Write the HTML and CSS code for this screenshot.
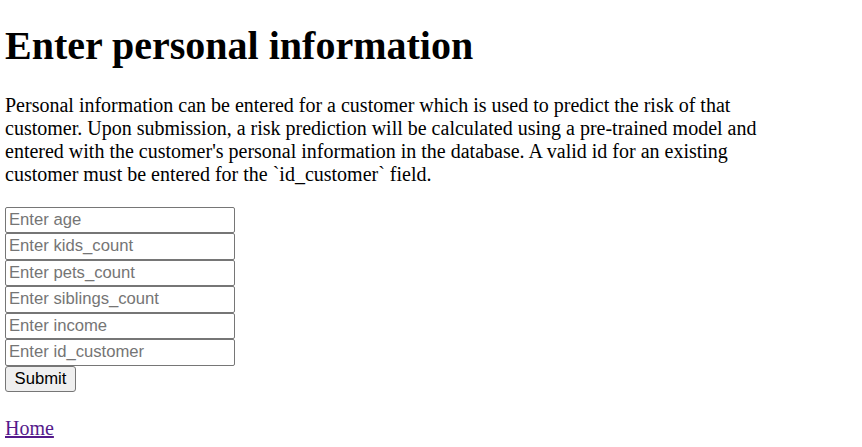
FILE: index.html
```html
<!DOCTYPE html>
<html>
<head>
<meta charset="utf-8">
<link rel="stylesheet" href="styles.css">
<title>Enter personal information</title>
</head>
<body>
<main class="page">
  <h1 class="title">Enter personal information</h1>
  <p class="intro">Personal information can be entered for a customer which is used to predict the risk of that customer. Upon submission, a risk prediction will be calculated using a pre-trained model and entered with the customer's personal information in the database. A valid id for an existing customer must be entered for the `id_customer` field.</p>
  <form class="form">
    <input class="field" type="text" placeholder="Enter age">
    <input class="field" type="text" placeholder="Enter kids_count">
    <input class="field" type="text" placeholder="Enter pets_count">
    <input class="field" type="text" placeholder="Enter siblings_count">
    <input class="field" type="text" placeholder="Enter income">
    <input class="field" type="text" placeholder="Enter id_customer">
    <button class="submit" type="submit">Submit</button>
  </form>
  <p class="nav"><a class="home" href="#">Home</a></p>
</main>
</body>
</html>
```
FILE: styles.css
```css
html, body {
  margin: 0;
  padding: 0;
  background: #ffffff;
}
body {
  font-family: "Liberation Serif", "Times New Roman", serif;
  color: #000000;
}
.page {
  padding: 0 5px;
}
.title {
  font-size: 40px;
  font-weight: bold;
  margin: 0;
  padding-top: 21.8px;
  line-height: normal;
}
.intro {
  font-size: 20px;
  margin: 24.8px 0 21px;
  max-width: 780px;
  line-height: normal;
}
.form {
  display: flex;
  flex-direction: column;
  align-items: flex-start;
  margin: 0;
}
.field {
  display: block;
  box-sizing: border-box;
  width: 230px;
  height: 26.5px;
  margin: 0;
  padding: 1px 3px;
  border: 1px solid #767676;
  border-radius: 2px;
  font-family: "Liberation Sans", Arial, sans-serif;
  font-size: 16.67px;
  color: #000;
  background: #fff;
}
.field::placeholder {
  color: #757575;
  opacity: 1;
}
.submit {
  box-sizing: border-box;
  height: 26.5px;
  width: 71px;
  margin: 0;
  padding: 0 8px;
  border: 1px solid #767676;
  border-radius: 3px;
  background: #efefef;
  font-family: "Liberation Sans", Arial, sans-serif;
  font-size: 16.67px;
  color: #000;
}
.nav {
  font-size: 20px;
  margin: 25px 0 0;
  line-height: normal;
}
.home {
  color: #551a8b;
  text-decoration: underline;
}
```
